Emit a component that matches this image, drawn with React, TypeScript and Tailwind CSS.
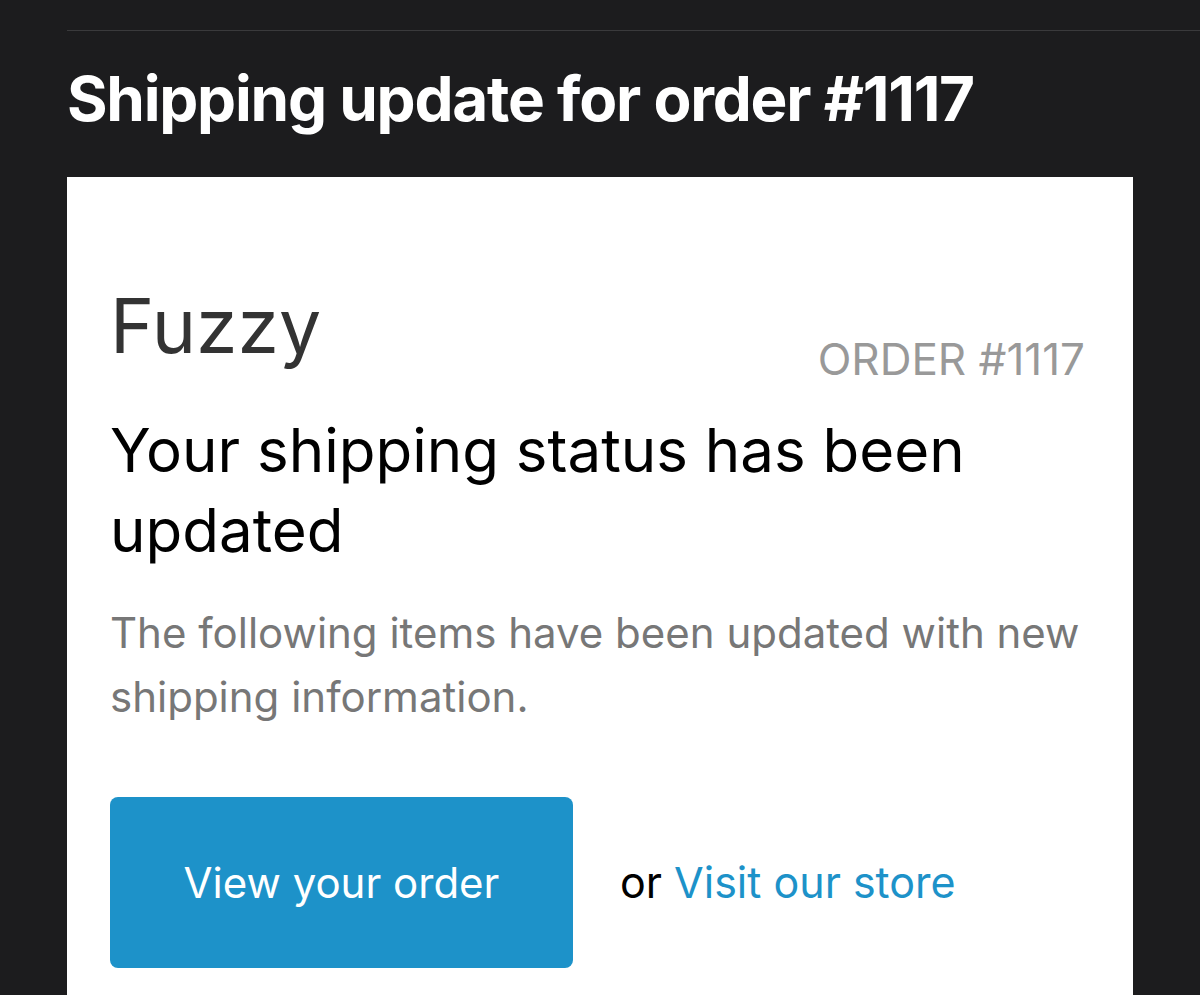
const font = { fontFamily: 'Inter, "Noto Sans", sans-serif' };

export default function App() {
    return (
        <div className="min-h-screen bg-[#1c1c1e] pt-[30px] pl-[67px]" style={font}>
            <div className="border-t border-[#3a3a3c]">
                <h1 className="mt-[37px] text-[62px] leading-none font-bold tracking-[-0.02em] text-white">
                    Shipping update for order #1117
                </h1>
            </div>
            <div className="mt-[47px] mr-[67px] bg-white pt-[111px] pr-[48px] pb-[40px] pl-[43px]">
                <div className="flex items-start justify-between">
                    <div className="text-[75px] leading-none text-[#333333]">Fuzzy</div>
                    <div className="mt-[49px] text-[44px] leading-none text-[#999999]">ORDER #1117</div>
                </div>
                <h2 className="mt-[29px] text-[60px] leading-[80px] text-black">
                    Your shipping status has been updated
                </h2>
                <p className="mt-[31px] -mr-[12px] text-[42px] leading-[64px] text-[#777777]">
                    The following items have been updated with new shipping information.
                </p>
                <div className="mt-[68px] flex items-center">
                    <a className="flex h-[171px] w-[463px] items-center justify-center rounded-[8px] bg-[#1d92c9] text-[42px] text-white">
                        View your order
                    </a>
                    <span className="ml-[47px] text-[43px] text-black">
                        or <a className="text-[#1d92c9]">Visit our store</a>
                    </span>
                </div>
            </div>
        </div>
    );
}
